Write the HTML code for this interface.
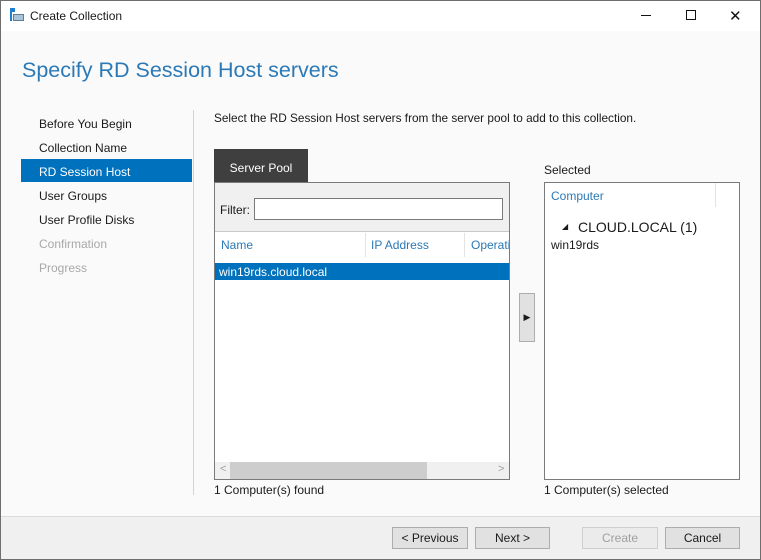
<!DOCTYPE html>
<html><head><meta charset="utf-8"><style>
*{margin:0;padding:0;box-sizing:border-box}
body{width:761px;height:560px;overflow:hidden;background:#fafafa;font-family:"Liberation Sans",sans-serif;font-size:12px;color:#1a1a1a;position:relative}
.a{position:absolute;white-space:nowrap}
.win{position:absolute;left:0;top:0;width:761px;height:560px;border:1px solid #6e6e6e}
.btn{position:absolute;top:527px;height:22px;border:1px solid #adadad;background:#e1e1e1;text-align:center;line-height:20px;font-size:12px}
</style></head><body>
<div class="a" style="left:0;top:0;width:761px;height:31px;background:#fff"></div>
<div class="a" style="left:10px;top:8px;width:5px;height:4px;background:#1e7fd0"></div>
<div class="a" style="left:10px;top:12px;width:2px;height:9px;background:#1e7fd0"></div>
<div class="a" style="left:13px;top:14px;width:11px;height:7px;background:#a9c3d9;border:1px solid #5d7e99"></div>
<div class="a" style="left:30px;top:9px;font-size:12px">Create Collection</div>
<div class="a" style="left:641px;top:15px;width:10px;height:1px;background:#111"></div>
<div class="a" style="left:686px;top:10px;width:10px;height:10px;border:1px solid #111"></div>
<div class="a" style="left:729px;top:7px;font-size:15px;color:#111">✕</div>
<div class="a" style="left:22px;top:58px;font-size:21.5px;color:#2b79b6">Specify RD Session Host servers</div>
<div class="a" style="left:193px;top:110px;width:1px;height:385px;background:#d4d4d4"></div>
<div class="a" style="left:21px;top:159px;width:171px;height:23px;background:#0071bc"></div>
<div class="a" style="left:39px;top:117px">Before You Begin</div>
<div class="a" style="left:39px;top:141px">Collection Name</div>
<div class="a" style="left:39px;top:165px;color:#fff">RD Session Host</div>
<div class="a" style="left:39px;top:189px">User Groups</div>
<div class="a" style="left:39px;top:213px">User Profile Disks</div>
<div class="a" style="left:39px;top:237px;color:#a8a8a8">Confirmation</div>
<div class="a" style="left:39px;top:261px;color:#a8a8a8">Progress</div>
<div class="a" style="left:214px;top:111px;font-size:11.8px">Select the RD Session Host servers from the server pool to add to this collection.</div>
<div class="a" style="left:214px;top:149px;width:94px;height:33px;background:#3f3f3f;color:#fff;text-align:center;line-height:38px">Server Pool</div>
<div class="a" style="left:214px;top:182px;width:296px;height:298px;border:1px solid #7a7a7a;background:#fff"></div>
<div class="a" style="left:215px;top:183px;width:294px;height:49px;background:#f0f0f0;border-bottom:1px solid #c8c8c8"></div>
<div class="a" style="left:220px;top:203px">Filter:</div>
<div class="a" style="left:254px;top:198px;width:249px;height:22px;border:1px solid #7a7a7a;background:#fff"></div>
<div class="a" style="left:221px;top:238px;color:#2b79b6">Name</div>
<div class="a" style="left:365px;top:233px;width:1px;height:24px;background:#e3e3e3"></div>
<div class="a" style="left:371px;top:238px;color:#2b79b6">IP Address</div>
<div class="a" style="left:464px;top:233px;width:1px;height:24px;background:#e3e3e3"></div>
<div class="a" style="left:471px;top:238px;color:#2b79b6;width:38px;overflow:hidden">Operating</div>
<div class="a" style="left:215px;top:263px;width:294px;height:17px;background:#0071bc"></div>
<div class="a" style="left:219px;top:265px;color:#fff">win19rds.cloud.local</div>
<div class="a" style="left:215px;top:462px;width:294px;height:17px;background:#f0f0f0"></div>
<div class="a" style="left:230px;top:462px;width:197px;height:17px;background:#cdcdcd"></div>
<div class="a" style="left:220px;top:463px;color:#a0a0a0;font-size:11px">&lt;</div>
<div class="a" style="left:498px;top:463px;color:#a0a0a0;font-size:11px">&gt;</div>
<div class="a" style="left:519px;top:293px;width:16px;height:49px;border:1px solid #adadad;background:#e1e1e1;font-size:9px;text-align:center;line-height:47px">▶</div>
<div class="a" style="left:544px;top:163px">Selected</div>
<div class="a" style="left:544px;top:182px;width:196px;height:298px;border:1px solid #7a7a7a;background:#fff"></div>
<div class="a" style="left:551px;top:189px;color:#2b79b6">Computer</div>
<div class="a" style="left:715px;top:183px;width:1px;height:24px;background:#e3e3e3"></div>
<div class="a" style="left:562px;top:222px;font-size:8px">◢</div>
<div class="a" style="left:578px;top:219px;font-size:14px">CLOUD.LOCAL (1)</div>
<div class="a" style="left:551px;top:238px">win19rds</div>
<div class="a" style="left:214px;top:483px">1 Computer(s) found</div>
<div class="a" style="left:544px;top:483px">1 Computer(s) selected</div>
<div class="a" style="left:0;top:516px;width:761px;height:44px;background:#f0f0f0;border-top:1px solid #dcdcdc"></div>
<div class="btn" style="left:392px;width:76px">&lt; Previous</div>
<div class="btn" style="left:475px;width:75px">Next &gt;</div>
<div class="btn" style="left:582px;width:76px;color:#a0a0a0;background:#ebebeb;border-color:#cfcfcf">Create</div>
<div class="btn" style="left:665px;width:75px">Cancel</div>
<div class="win"></div>
</body></html>
